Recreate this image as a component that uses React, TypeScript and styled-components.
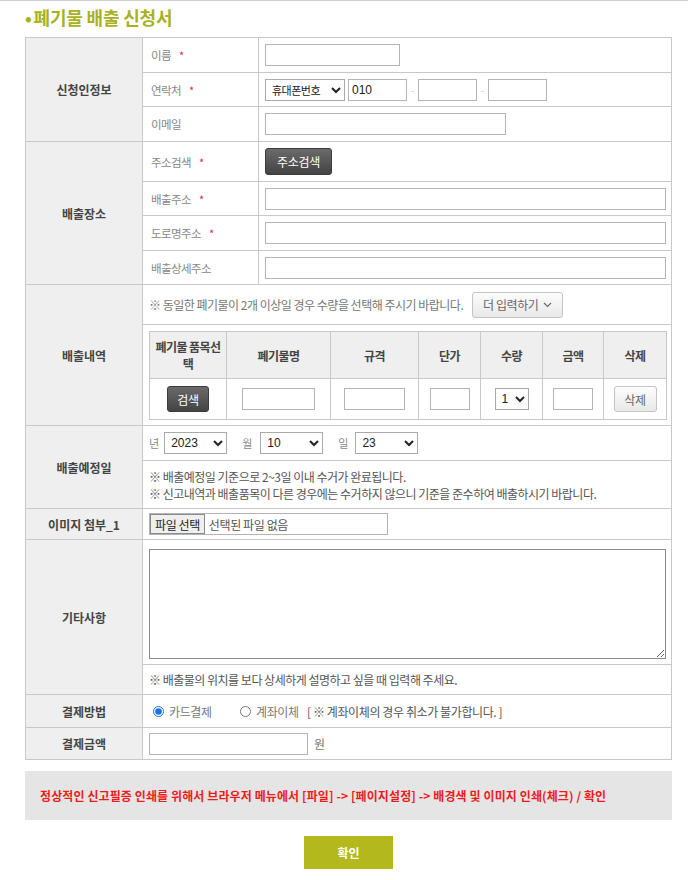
import React from "react"
import styled, { createGlobalStyle } from "styled-components"

const GlobalStyle = createGlobalStyle`
  html, body {
    margin: 0;
    padding: 0;
    background: #fff;
  }
  body {
    font-family: "Noto Sans CJK KR", "Noto Sans", sans-serif;
    font-size: 12px;
    color: #666;
  }
  input, select, button, textarea {
    font-family: "Noto Sans CJK KR", "Noto Sans", sans-serif;
  }
  *, *::before, *::after {
    box-sizing: border-box;
  }
`

const Page = styled.div`
  width: 688px;
  border-top: 1px solid #d0d0d0;
  padding: 0 16px 11px 25px;
`

const Title = styled.h2`
  margin: 0;
  height: 36px;
  display: flex;
  align-items: center;
  padding-bottom: 4px;
  font-size: 18px;
  font-weight: 700;
  color: #a8b21e;
  letter-spacing: -0.2px;
  &::before {
    content: "•";
    margin-right: 2px;
  }
`

const Form = styled.table`
  width: 647px;
  border-collapse: collapse;
  table-layout: fixed;
  border: 1px solid #c8c8c8;
`

const Group = styled.th`
  background: #efefef;
  border: 1px solid #c8c8c8;
  font-size: 12px;
  font-weight: 700;
  color: #444;
  text-align: center;
  vertical-align: middle;
  padding: 0;
`

const Label = styled.td<{ h?: number }>`
  height: ${(p) => p.h ?? 34}px;
  border: 1px solid #c8c8c8;
  padding: 0 0 0 8px;
  color: #888;
  font-size: 11.5px;
  letter-spacing: -0.6px;
  vertical-align: middle;
`

const Value = styled.td<{ h?: number; pad?: string }>`
  height: ${(p) => p.h ?? 34}px;
  border: 1px solid #c8c8c8;
  padding: ${(p) => p.pad ?? "0 0 0 6px"};
  vertical-align: middle;
  color: #777;
  font-size: 12px;
`

const Star = styled.span`
  color: #d8295a;
  margin-left: 8px;
  font-size: 11px;
`

const Line = styled.div<{ gap?: number }>`
  display: flex;
  align-items: center;
  gap: ${(p) => p.gap ?? 0}px;
`

const Field = styled.input<{ w: number; ml?: number }>`
  width: ${(p) => p.w}px;
  height: 22px;
  margin: 0 0 0 ${(p) => p.ml ?? 0}px;
  border: 1px solid #b4b4b4;
  padding: 0 3px;
  font-family: "Liberation Sans", Arial, sans-serif;
  font-size: 12px;
  color: #222;
  outline: none;
  background: #fff;
`

const Select = styled.select<{ w: number; small?: boolean }>`
  width: ${(p) => p.w}px;
  height: 22px;
  border: 1px solid #aaa;
  border-radius: 0;
  padding: 0 2px;
  font-family: ${(p) =>
    p.small ? `"Noto Sans CJK KR", sans-serif` : `"Liberation Sans", Arial, sans-serif`};
  font-size: ${(p) => (p.small ? 11 : 12)}px;
  letter-spacing: ${(p) => (p.small ? -0.5 : 0)}px;
  color: #222;
  background: #fff;
`

const Dash = styled.span`
  color: #ccc;
  width: 11px;
  text-align: center;
  font-size: 10px;
`

const DarkButton = styled.button<{ w: number; h: number }>`
  width: ${(p) => p.w}px;
  height: ${(p) => p.h}px;
  border: 1px solid #3c3c3c;
  border-radius: 3px;
  background: linear-gradient(#6a6a6a, #444);
  color: #fff;
  font-size: 12px;
  letter-spacing: -0.3px;
  padding: 0;
  cursor: pointer;
`

const LightButton = styled.button<{ w: number; h: number }>`
  width: ${(p) => p.w}px;
  height: ${(p) => p.h}px;
  border: 1px solid #c4c4c4;
  border-radius: 3px;
  background: linear-gradient(#fdfdfd, #e8e8e8);
  color: #666;
  font-size: 12px;
  letter-spacing: -0.4px;
  padding: 0;
  display: inline-flex;
  align-items: center;
  justify-content: center;
  gap: 5px;
  cursor: pointer;
`

const Notice = styled.div`
  display: flex;
  align-items: center;
  gap: 9px;
  height: 40px;
  padding-left: 6px;
  border-bottom: 1px solid #c8c8c8;
  letter-spacing: -0.5px;
`

const ItemWrap = styled.div`
  padding: 6px 6px 5px 6px;
`

const Items = styled.table`
  width: 100%;
  border-collapse: collapse;
  table-layout: fixed;
  border: 1px solid #c8c8c8;
`

const ItemHead = styled.th`
  height: 47px;
  background: #efefef;
  border: 1px solid #c8c8c8;
  color: #444;
  font-size: 12px;
  font-weight: 700;
  line-height: 17px;
  letter-spacing: -0.6px;
  padding: 0 2px;
  word-break: break-all;
`

const ItemCell = styled.td`
  height: 41px;
  border: 1px solid #c8c8c8;
  text-align: center;
  vertical-align: middle;
  padding: 0;
`

const Unit = styled.span<{ before?: number; after?: number }>`
  color: #888;
  font-size: 11px;
  margin: 0 ${(p) => p.after ?? 5}px 0 ${(p) => p.before ?? 0}px;
`

const Note = styled.div`
  line-height: 17px;
  color: #555;
  letter-spacing: -0.5px;
`

const Split = styled.div<{ h: number; pt?: number }>`
  height: ${(p) => p.h}px;
  display: flex;
  flex-direction: column;
  justify-content: ${(p) => (p.pt ? "flex-start" : "center")};
  padding: ${(p) => p.pt ?? 0}px 0 0 6px;
  border-bottom: 1px solid #c8c8c8;
`

const NoteBox = styled.div<{ h: number }>`
  height: ${(p) => p.h}px;
  display: flex;
  flex-direction: column;
  justify-content: center;
  padding-left: 6px;
`

const FileBox = styled.div`
  width: 239px;
  height: 22px;
  border: 1px solid #b4b4b4;
  display: flex;
  align-items: center;
  gap: 4px;
  color: #555;
  letter-spacing: -0.4px;
`

const FileButton = styled.span`
  height: 20px;
  border: 1px solid #8a8a8a;
  background: #efefef;
  color: #222;
  padding: 0 4px;
  display: flex;
  align-items: center;
`

const Memo = styled.textarea`
  width: 517px;
  height: 110px;
  border: 1px solid #8a8a8a;
  margin: 0;
  display: block;
  resize: both;
`

const Radio = styled.label<{ w: number }>`
  display: inline-flex;
  align-items: center;
  width: ${(p) => p.w}px;
  color: #777;
  letter-spacing: -0.4px;
  input {
    margin: 0 5px 0 4px;
    width: 11px;
    height: 11px;
    accent-color: #1a73e8;
  }
`

const Warn = styled.span`
  color: #555;
  letter-spacing: -0.4px;
  margin-left: 5px;
`

const PrintTip = styled.div`
  margin-top: 11px;
  width: 647px;
  height: 49px;
  background: #e5e5e5;
  display: flex;
  align-items: center;
  padding-left: 15px;
  color: #f01a1a;
  font-size: 12px;
  font-weight: 700;
  letter-spacing: 0.1px;
`

const Actions = styled.div`
  display: flex;
  justify-content: center;
  padding-top: 16px;
  width: 647px;
`

const Submit = styled.button`
  width: 89px;
  height: 33px;
  border: none;
  background: #b3b81c;
  color: #fff;
  font-size: 12px;
  font-weight: 700;
  cursor: pointer;
`

const Chevron = () => (
  <svg width="9" height="6" viewBox="0 0 9 6">
    <path d="M1 1l3.5 3.5L8 1" fill="none" stroke="#666" strokeWidth="1.1" />
  </svg>
)

const itemCols = [77, 104, 88, 62, 62, 61, 63]

export default function App() {
  return (
    <Page>
      <GlobalStyle />
      <Title>폐기물 배출 신청서</Title>
      <Form>
        <colgroup>
          <col style={{ width: 117 }} />
          <col style={{ width: 116 }} />
          <col />
        </colgroup>
        <tbody>
          <tr>
            <Group rowSpan={3}>신청인정보</Group>
            <Label h={35}>
              이름<Star>*</Star>
            </Label>
            <Value h={35}>
              <Field w={135} />
            </Value>
          </tr>
          <tr>
            <Label>
              연락처<Star>*</Star>
            </Label>
            <Value>
              <Line>
                <Select w={80} small defaultValue="휴대폰번호">
                  <option>휴대폰번호</option>
                </Select>
                <Field w={59} ml={3} defaultValue="010" />
                <Dash>-</Dash>
                <Field w={59} />
                <Dash>-</Dash>
                <Field w={59} />
              </Line>
            </Value>
          </tr>
          <tr>
            <Label h={35}>이메일</Label>
            <Value h={35}>
              <Field w={241} />
            </Value>
          </tr>

          <tr>
            <Group rowSpan={4}>배출장소</Group>
            <Label h={40}>
              주소검색<Star>*</Star>
            </Label>
            <Value h={40}>
              <DarkButton w={67} h={27}>주소검색</DarkButton>
            </Value>
          </tr>
          <tr>
            <Label>
              배출주소<Star>*</Star>
            </Label>
            <Value>
              <Field w={401} />
            </Value>
          </tr>
          <tr>
            <Label h={35}>
              도로명주소<Star>*</Star>
            </Label>
            <Value h={35}>
              <Field w={401} />
            </Value>
          </tr>
          <tr>
            <Label>배출상세주소</Label>
            <Value>
              <Field w={401} />
            </Value>
          </tr>

          <tr>
            <Group>배출내역</Group>
            <Value colSpan={2} h={141} pad="0">
              <Notice>
                ※ 동일한 폐기물이 2개 이상일 경우 수량을 선택해 주시기 바랍니다.
                <LightButton w={91} h={26}>
                  더 입력하기 <Chevron />
                </LightButton>
              </Notice>
              <ItemWrap>
                <Items>
                  <colgroup>
                    {itemCols.map((w, i) => (
                      <col key={i} style={{ width: w }} />
                    ))}
                  </colgroup>
                  <thead>
                    <tr>
                      <ItemHead>폐기물 품목선택</ItemHead>
                      <ItemHead>폐기물명</ItemHead>
                      <ItemHead>규격</ItemHead>
                      <ItemHead>단가</ItemHead>
                      <ItemHead>수량</ItemHead>
                      <ItemHead>금액</ItemHead>
                      <ItemHead>삭제</ItemHead>
                    </tr>
                  </thead>
                  <tbody>
                    <tr>
                      <ItemCell>
                        <DarkButton w={42} h={26}>검색</DarkButton>
                      </ItemCell>
                      <ItemCell>
                        <Field w={73} />
                      </ItemCell>
                      <ItemCell>
                        <Field w={61} />
                      </ItemCell>
                      <ItemCell>
                        <Field w={40} />
                      </ItemCell>
                      <ItemCell>
                        <Select w={34} defaultValue="1">
                          <option>1</option>
                        </Select>
                      </ItemCell>
                      <ItemCell>
                        <Field w={40} />
                      </ItemCell>
                      <ItemCell>
                        <LightButton w={43} h={26}>삭제</LightButton>
                      </ItemCell>
                    </tr>
                  </tbody>
                </Items>
              </ItemWrap>
            </Value>
          </tr>

          <tr>
            <Group>배출예정일</Group>
            <Value colSpan={2} h={82} pad="0">
              <Split h={35}>
                <Line>
                  <Unit>년</Unit>
                  <Select w={63} defaultValue="2023">
                    <option>2023</option>
                  </Select>
                  <Unit before={15} after={8}>월</Unit>
                  <Select w={63} defaultValue="10">
                    <option>10</option>
                  </Select>
                  <Unit before={15} after={7}>일</Unit>
                  <Select w={63} defaultValue="23">
                    <option>23</option>
                  </Select>
                </Line>
              </Split>
              <NoteBox h={47}>
                <Note>※ 배출예정일 기준으로 2~3일 이내 수거가 완료됩니다.</Note>
                <Note>※ 신고내역과 배출품목이 다른 경우에는 수거하지 않으니 기준을 준수하여 배출하시기 바랍니다.</Note>
              </NoteBox>
            </Value>
          </tr>

          <tr>
            <Group>이미지 첨부_1</Group>
            <Value colSpan={2} h={31}>
              <FileBox>
                <FileButton>파일 선택</FileButton>
                선택된 파일 없음
              </FileBox>
            </Value>
          </tr>

          <tr>
            <Group>기타사항</Group>
            <Value colSpan={2} h={154} pad="0">
              <Split h={125} pt={9}>
                <Memo />
              </Split>
              <NoteBox h={29}>
                <Note>※ 배출물의 위치를 보다 상세하게 설명하고 싶을 때 입력해 주세요.</Note>
              </NoteBox>
            </Value>
          </tr>

          <tr>
            <Group>결제방법</Group>
            <Value colSpan={2} h={33}>
              <Line>
                <Radio w={87}>
                  <input type="radio" name="pay" defaultChecked />
                  카드결제
                </Radio>
                <Radio w={66}>
                  <input type="radio" name="pay" />
                  계좌이체
                </Radio>
                <Warn>[ ※ 계좌이체의 경우 취소가 불가합니다. ]</Warn>
              </Line>
            </Value>
          </tr>

          <tr>
            <Group>결제금액</Group>
            <Value colSpan={2} h={32}>
              <Line gap={6}>
                <Field w={159} />
                <span>원</span>
              </Line>
            </Value>
          </tr>
        </tbody>
      </Form>

      <PrintTip>
        정상적인 신고필증 인쇄를 위해서 브라우저 메뉴에서 [파일] -&gt; [페이지설정] -&gt; 배경색 및 이미지 인쇄(체크) / 확인
      </PrintTip>
      <Actions>
        <Submit>확인</Submit>
      </Actions>
    </Page>
  )
}
